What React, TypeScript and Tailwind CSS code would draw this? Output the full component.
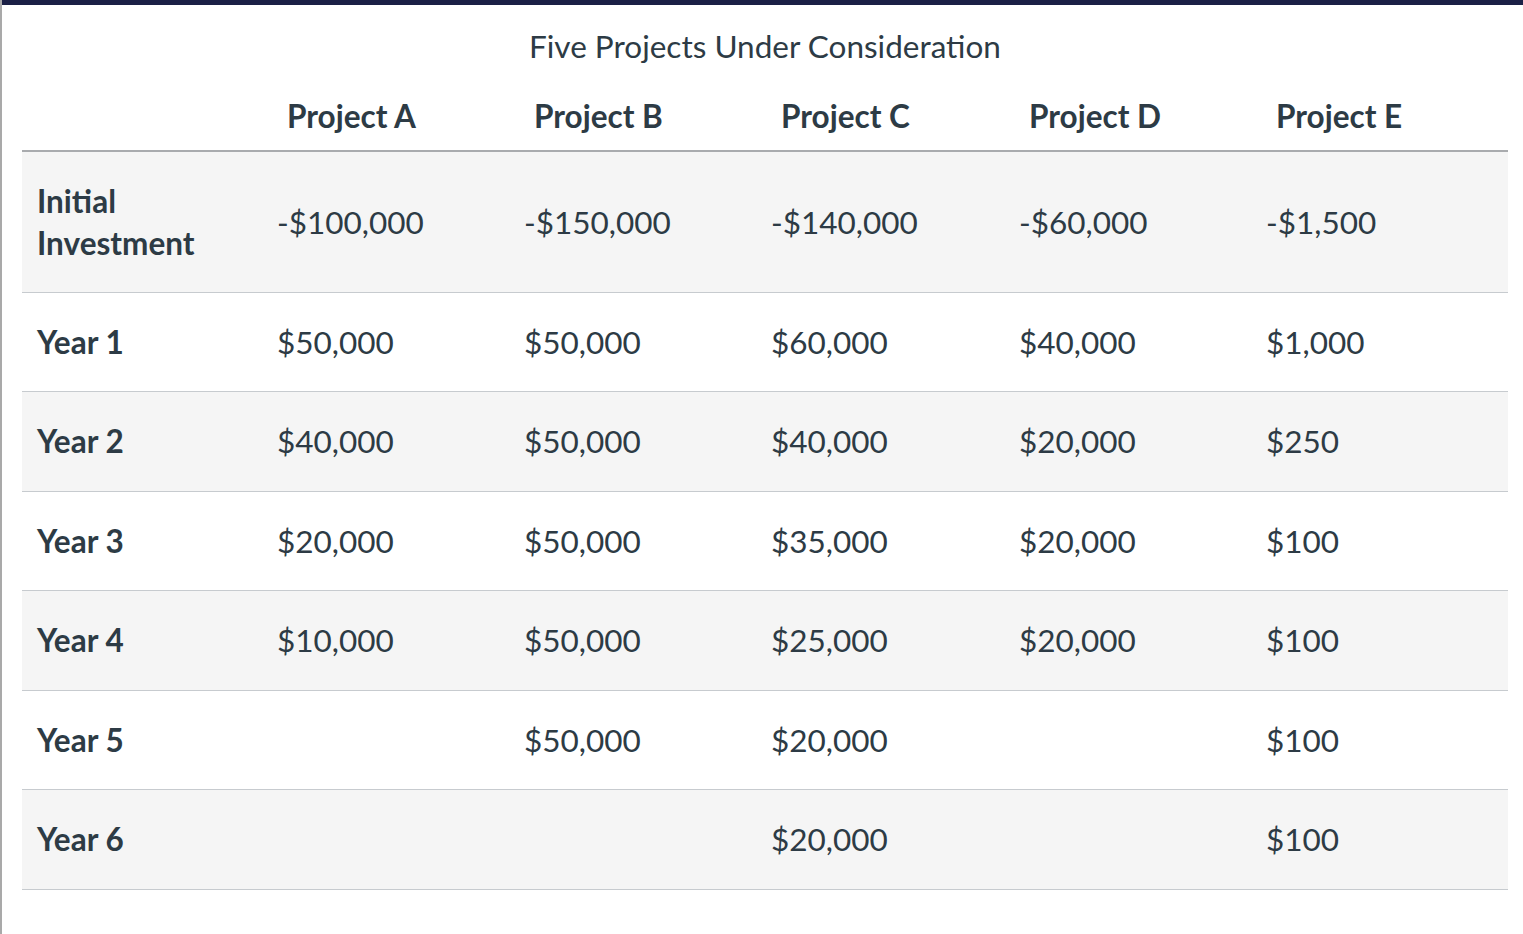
const projects = ["Project A", "Project B", "Project C", "Project D", "Project E"];

const rows: { label: string; values: string[] }[] = [
  { label: "Initial Investment", values: ["-$100,000", "-$150,000", "-$140,000", "-$60,000", "-$1,500"] },
  { label: "Year 1", values: ["$50,000", "$50,000", "$60,000", "$40,000", "$1,000"] },
  { label: "Year 2", values: ["$40,000", "$50,000", "$40,000", "$20,000", "$250"] },
  { label: "Year 3", values: ["$20,000", "$50,000", "$35,000", "$20,000", "$100"] },
  { label: "Year 4", values: ["$10,000", "$50,000", "$25,000", "$20,000", "$100"] },
  { label: "Year 5", values: ["", "$50,000", "$20,000", "", "$100"] },
  { label: "Year 6", values: ["", "", "$20,000", "", "$100"] },
];

export default function App() {
  return (
    <div className="flex min-h-screen bg-white font-['Lato',sans-serif] text-[#2d3b45]">
      <div className="w-[2px] shrink-0 bg-[#a9a9a9]" />
      <div className="flex-1">
        <div className="h-[5px] bg-[#1b2046]" />
        <table className="ml-[20px] mt-[20px] w-[1486px] table-fixed border-collapse text-[31.5px] leading-[42px]">
          <caption className="text-center font-normal">Five Projects Under Consideration</caption>
          <colgroup>
            <col className="w-[240px]" />
            <col className="w-[247px]" />
            <col className="w-[247px]" />
            <col className="w-[248px]" />
            <col className="w-[247px]" />
            <col className="w-[257px]" />
          </colgroup>
          <thead>
            <tr>
              <th className="border-b-2 border-[#a9abae] px-[15px] pb-[13px] pt-[28px]" />
              {projects.map((p) => (
                <th
                  key={p}
                  className="border-b-2 border-[#a9abae] pb-[13px] pl-[25px] pr-[10px] pt-[28px] text-left font-bold"
                >
                  {p}
                </th>
              ))}
            </tr>
          </thead>
          <tbody>
            {rows.map((row, i) => (
              <tr key={row.label} className={i % 2 === 0 ? "bg-[#f5f5f5]" : "bg-white"}>
                <th
                  scope="row"
                  className={`border-b border-[#c7cbcf] px-[15px] text-left font-bold ${
                    i === 0 ? "py-[27.75px]" : "py-[28.25px]"
                  }`}
                >
                  {row.label}
                </th>
                {row.values.map((v, j) => (
                  <td key={j} className="border-b border-[#c7cbcf] px-[15px] align-middle font-normal">
                    {v}
                  </td>
                ))}
              </tr>
            ))}
          </tbody>
        </table>
      </div>
    </div>
  );
}
